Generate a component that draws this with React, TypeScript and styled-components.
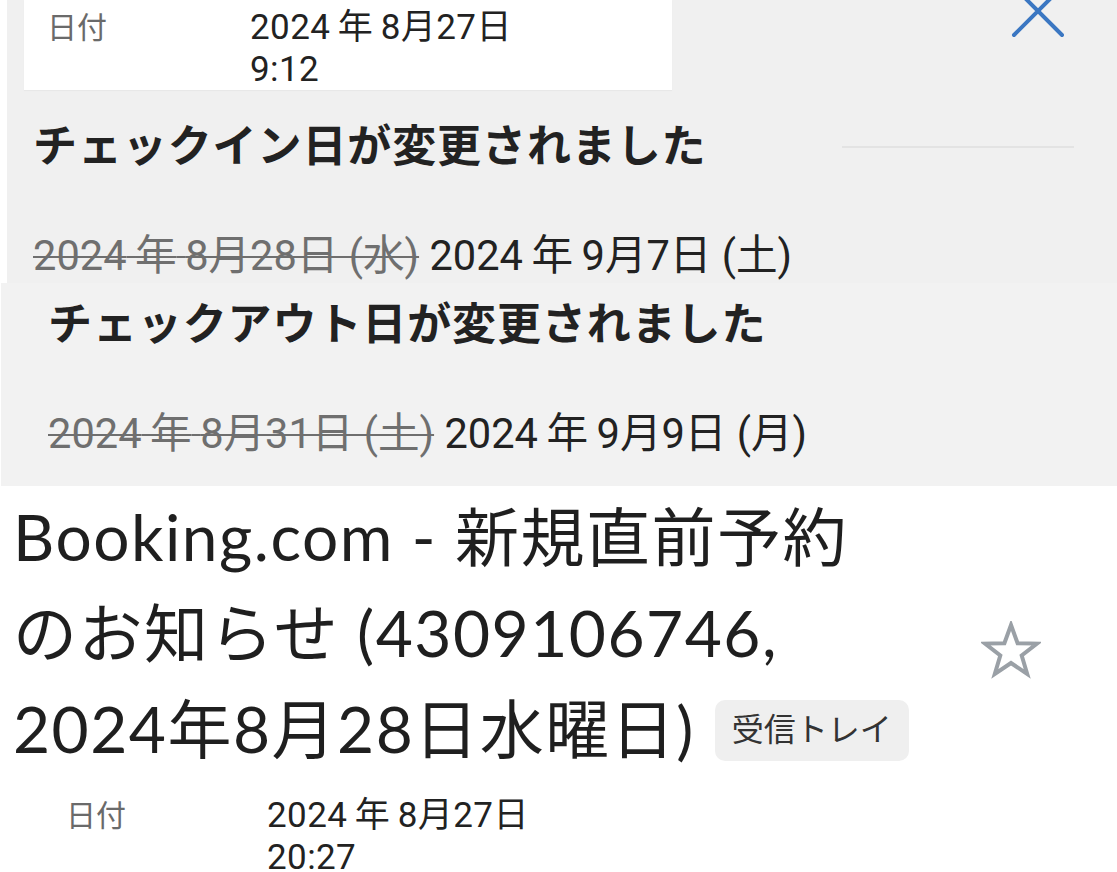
import styled, { createGlobalStyle } from "styled-components";

const GlobalStyle = createGlobalStyle`
  html, body {
    margin: 0;
    padding: 0;
    background: #ffffff;
  }
  body {
    width: 1117px;
    height: 872px;
    overflow: hidden;
    font-family: Roboto, "Noto Sans CJK JP", sans-serif;
    color: #222222;
  }
`;

const TS = "\u2009";

export default function App() {
  return (
    <>
      <GlobalStyle />
      <Page>
        <ChangePanel $offset="7px" $height="283px" $bg="#f0f0f0" $padLeft="26px" $padTop="0">
          <TopBar>
            <DateCard>
              <Label>日付</Label>
              <Value>
                2024{TS}年{TS}8月27日
                <br />
                9:12
              </Value>
            </DateCard>
            <CloseButton aria-label="閉じる">
              <svg width="56" height="56" viewBox="0 0 56 56">
                <path d="M4 4 L52 52 M52 4 L4 52" stroke="#3b77c2" strokeWidth="4" strokeLinecap="round" fill="none" />
              </svg>
            </CloseButton>
          </TopBar>
          <HeadingRow>
            <Heading>チェックイン日が変更されました</Heading>
            <Rule />
          </HeadingRow>
          <DateChange>
            <OldDate>2024{TS}年{TS}8月28日 (水)</OldDate> 2024{TS}年{TS}9月7日 (土)
          </DateChange>
        </ChangePanel>

        <ChangePanel $offset="1px" $height="203px" $bg="#f2f2f2" $padLeft="47px" $padTop="14px">
          <HeadingRow>
            <Heading>チェックアウト日が変更されました</Heading>
          </HeadingRow>
          <DateChange>
            <OldDate>2024{TS}年{TS}8月31日 (土)</OldDate> 2024{TS}年{TS}9月9日 (月)
          </DateChange>
        </ChangePanel>

        <Message>
          <SubjectRow>
            <Subject>
              Booking.com - 新規直前予約
              <br />
              のお知らせ (4309106746,
              <br />
              2024年8月28日水曜日) <Badge>受信トレイ</Badge>
            </Subject>
            <StarButton aria-label="スター">
              <svg width="60" height="58" viewBox="0 0 60 58">
                <polygon
                  points="30,4 36.6,22.2 56,22.6 40.7,34.5 46.2,53 30,42 13.8,53 19.3,34.5 4,22.6 23.4,22.2"
                  fill="none"
                  stroke="#9aa0a6"
                  strokeWidth="4"
                  strokeLinejoin="miter"
                />
              </svg>
            </StarButton>
          </SubjectRow>
          <MetaRow>
            <Label>日付</Label>
            <Value>
              2024{TS}年{TS}8月27日
              <br />
              20:27
            </Value>
          </MetaRow>
        </Message>
      </Page>
    </>
  );
}

const Page = styled.div`
  width: 1117px;
  display: flex;
  flex-direction: column;
`;

const ChangePanel = styled.section<{ $offset: string; $height: string; $bg: string; $padLeft: string; $padTop: string }>`
  box-sizing: border-box;
  margin-left: ${(p) => p.$offset};
  height: ${(p) => p.$height};
  background: ${(p) => p.$bg};
  padding-left: ${(p) => p.$padLeft};
  padding-top: ${(p) => p.$padTop};
  display: flex;
  flex-direction: column;
  overflow: hidden;
`;

const TopBar = styled.div`
  display: flex;
  align-items: flex-start;
  margin-left: -9px;
  height: 90px;
`;

const DateCard = styled.div`
  box-sizing: border-box;
  width: 648px;
  height: 90px;
  background: #ffffff;
  padding: 7px 0 0 23px;
  display: grid;
  grid-template-columns: 203px 1fr;
  overflow: hidden;
  box-shadow: 0 1px 1px rgba(0, 0, 0, 0.03);
`;

const Label = styled.div`
  font-size: 30px;
  line-height: 42px;
  color: #6a6a6a;
`;

const Value = styled.div`
  font-size: 35px;
  line-height: 42px;
  color: #222222;
  letter-spacing: 0.4px;
`;

const CloseButton = styled.button`
  margin-left: auto;
  margin-right: 51px;
  margin-top: -17px;
  padding: 0;
  border: 0;
  background: none;
  display: flex;
`;

const HeadingRow = styled.div`
  display: flex;
  align-items: center;
  margin-top: 29px;
  &:first-child {
    margin-top: 0;
  }
`;

const Heading = styled.h2`
  margin: 0;
  font-family: Roboto, "Noto Sans CJK JP", sans-serif;
  font-size: 44px;
  line-height: 56px;
  font-weight: 700;
  color: #222222;
  letter-spacing: 0.9px;
`;

const Rule = styled.div`
  margin-left: auto;
  margin-right: 43px;
  width: 232px;
  height: 2px;
  background: #e3e3e3;
`;

const DateChange = styled.div`
  margin-top: 55px;
  font-size: 41.6px;
  line-height: 52px;
  color: #222222;
  white-space: nowrap;
`;

const OldDate = styled.span`
  color: #6f6f6f;
  text-decoration: line-through;
  text-decoration-thickness: 2px;
  text-decoration-color: #6f6f6f;
`;

const Message = styled.section`
  display: flex;
  flex-direction: column;
  padding: 3px 0 0 0;
`;

const SubjectRow = styled.div`
  display: flex;
  align-items: flex-start;
`;

const Subject = styled.h1`
  margin: 0;
  padding-left: 13px;
  width: 940px;
  font-family: Lato, "Noto Sans CJK JP", sans-serif;
  font-size: 64px;
  line-height: 96px;
  font-weight: 400;
  letter-spacing: 1.5px;
  color: #1f1f1f;
`;

const Badge = styled.span`
  display: inline-block;
  vertical-align: middle;
  margin-left: 2px;
  padding: 0 17px;
  height: 61px;
  line-height: 61px;
  border-radius: 10px;
  background: #efefef;
  font-family: Roboto, "Noto Sans CJK JP", sans-serif;
  font-size: 32px;
  letter-spacing: 0;
  color: #333333;
  position: relative;
  top: -6px;
`;

const StarButton = styled.button`
  margin-top: 132px;
  margin-left: 28px;
  padding: 0;
  border: 0;
  background: none;
  display: flex;
`;

const MetaRow = styled.div`
  display: grid;
  grid-template-columns: 201px 1fr;
  padding-left: 66px;
  margin-top: 18px;
`;
